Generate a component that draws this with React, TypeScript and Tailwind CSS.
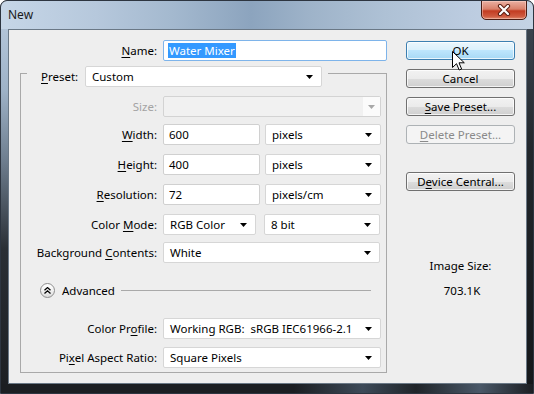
import React from "react";

const Arrow = ({ gray }: { gray?: boolean }) => (
  <svg width="7" height="4" viewBox="0 0 7 4" className="shrink-0">
    <path d="M0 0H7L3.5 4Z" fill={gray ? "#a8a8a8" : "#000"} />
  </svg>
);

function Select({ w, children }: { w: string; children: React.ReactNode }) {
  return (
    <div
      className={`${w} h-[21px] bg-white border border-[#d6d6d6] rounded-[2px] flex items-center justify-between pl-[6px] pr-[8px] whitespace-nowrap`}
    >
      <span>{children}</span>
      <Arrow />
    </div>
  );
}

function Input({ w, children }: { w: string; children: React.ReactNode }) {
  return (
    <div
      className={`${w} h-[21px] bg-white border border-[#d0d0d0] rounded-[2px] flex items-center pl-[5px]`}
    >
      {children}
    </div>
  );
}

function Label({ children, gray }: { children: React.ReactNode; gray?: boolean }) {
  return (
    <div
      className={`w-[137px] shrink-0 text-right pr-[1px] whitespace-nowrap ${gray ? "text-[#a3a3a3]" : "text-black"}`}
    >
      {children}
    </div>
  );
}

function U({ children }: { children: React.ReactNode }) {
  return <span className="underline underline-offset-[2px]">{children}</span>;
}

function Btn({
  children,
  kind,
  className,
}: {
  children: React.ReactNode;
  kind?: "hover" | "disabled";
  className?: string;
}) {
  const base =
    "h-[19px] w-[109px] rounded-[3px] border flex items-center justify-center shadow-[inset_0_0_0_1px_rgba(255,255,255,0.75)]";
  const style =
    kind === "hover"
      ? "border-[#3c7fb1] bg-[linear-gradient(180deg,#eaf6fd_0%,#d9f0fc_50%,#bee6fd_50%,#a7d9f5_100%)] text-black"
      : kind === "disabled"
      ? "border-[#adb2b5] bg-[#f4f4f4] text-[#8a8a8a] shadow-none"
      : "border-[#707070] bg-[linear-gradient(180deg,#f2f2f2_0%,#ebebeb_50%,#dddddd_50%,#cfcfcf_100%)] text-black";
  return <div className={`${base} ${style} ${className ?? ""}`}>{children}</div>;
}

export default function App() {
  return (
    <div className="w-[534px] h-[394px] flex flex-col overflow-hidden bg-white font-['Noto_Sans',sans-serif] text-[11.5px] leading-none text-black select-none">
      <div className="w-[534px] h-[394px] flex flex-col rounded-t-[7px] border border-[#2d3540] bg-[#1b1e22] overflow-hidden relative">
        {/* title bar */}
        <div className="h-[28px] shrink-0 flex items-start bg-[linear-gradient(90deg,#c6d6e7_0%,#b6c8dc_18%,#a4b9cf_32%,#8ca4be_47%,#9eb3c9_58%,#aec1d5_72%,#bccce0_88%,#c4d3e4_100%)]">
          <div className="pl-[7px] pt-[8px] text-[12px] text-[#1a1a1a]">New</div>
          <div className="ml-auto mr-[6px] w-[46px] h-[20px] -mt-[1px] rounded-b-[5px] border border-[#4a1d14] bg-[linear-gradient(180deg,#eab0a2_0%,#d9806a_45%,#c23c22_55%,#cf5a3f_85%,#de8a6e_100%)] shadow-[inset_0_0_0_1px_rgba(255,220,210,0.45)] flex items-center justify-center">
            <svg width="14" height="12" viewBox="0 0 14 12">
              <path d="M3 2L11 10M11 2L3 10" stroke="#5b1e12" strokeWidth="4.2" strokeLinecap="round" />
              <path d="M3 2L11 10M11 2L3 10" stroke="#ffffff" strokeWidth="2.2" strokeLinecap="round" />
            </svg>
          </div>
        </div>

        {/* body */}
        <div className="flex h-[355px] shrink-0">
          <div className="w-[7px] shrink-0 bg-[linear-gradient(180deg,#b2c4d8_0px,#9fb3c8_60px,#6f7f90_130px,#2a2f35_220px,#1c1f23_100%)]" />
          <div className="w-[519px] shrink-0 h-[355px] border border-[#6a7886] bg-[#eeeeee] flex">
            {/* left part */}
            <div className="w-[378px] shrink-0 flex flex-col">
              {/* Name row */}
              <div className="flex items-center mt-[10px]">
                <div className="w-[149px] shrink-0 text-right pr-[1px]">
                  <U>N</U>ame:
                </div>
                <div className="ml-[5px] w-[226px] h-[21px] bg-white border border-[#7eb4ea] rounded-[2px] flex items-center pl-[4px]">
                  <span className="bg-[#3399ff] text-white px-[1px] h-[15px] flex items-center">Water Mixer</span>
                </div>
              </div>

              {/* Group box */}
              <div className="ml-[11px] mt-[12px] w-[367px] h-[300px] border border-[#a9a9a9] flex flex-col">
                {/* Preset header overlapping the border */}
                <div className="flex -mt-[8px]">
                  <div className="ml-[6px] pl-[14px] pr-[6px] bg-[#eeeeee] flex items-center">
                    <div className="w-[44px] shrink-0">
                      <U>P</U>reset:
                    </div>
                    <Select w="w-[237px]">Custom</Select>
                  </div>
                </div>

                {/* Size */}
                <div className="flex items-center mt-[9px]">
                  <Label gray>Size:</Label>
                  <div className="ml-[5px] w-[218px] h-[21px] border border-[#d3d3d3] rounded-[2px] bg-[#f1f1f1] flex justify-end">
                    <div className="w-[17px] h-full bg-[#fbfbfb] flex items-center justify-center">
                      <Arrow gray />
                    </div>
                  </div>
                </div>

                {/* Width */}
                <div className="flex items-center mt-[7px]">
                  <Label>
                    <U>W</U>idth:
                  </Label>
                  <div className="ml-[5px] flex gap-[5px]">
                    <Input w="w-[97px]">600</Input>
                    <Select w="w-[116px]">pixels</Select>
                  </div>
                </div>

                {/* Height */}
                <div className="flex items-center mt-[9px]">
                  <Label>
                    <U>H</U>eight:
                  </Label>
                  <div className="ml-[5px] flex gap-[5px]">
                    <Input w="w-[97px]">400</Input>
                    <Select w="w-[116px]">pixels</Select>
                  </div>
                </div>

                {/* Resolution */}
                <div className="flex items-center mt-[9px]">
                  <Label>
                    <U>R</U>esolution:
                  </Label>
                  <div className="ml-[5px] flex gap-[5px]">
                    <Input w="w-[97px]">72</Input>
                    <Select w="w-[116px]">pixels/cm</Select>
                  </div>
                </div>

                {/* Color Mode */}
                <div className="flex items-center mt-[9px]">
                  <Label>
                    Color <U>M</U>ode:
                  </Label>
                  <div className="ml-[5px] flex gap-[8px]">
                    <Select w="w-[93px]">RGB Color</Select>
                    <Select w="w-[116px]">8 bit</Select>
                  </div>
                </div>

                {/* Background Contents */}
                <div className="flex items-center mt-[7px]">
                  <Label>
                    Background <U>C</U>ontents:
                  </Label>
                  <div className="ml-[5px]">
                    <Select w="w-[217px]">White</Select>
                  </div>
                </div>

                {/* Advanced */}
                <div className="flex items-center mt-[20px] h-[15px]">
                  <div className="ml-[19px] w-[15px] h-[15px] rounded-full border border-[#8d8d8d] bg-[linear-gradient(180deg,#ffffff_0%,#f2f2f2_50%,#dcdcdc_100%)] flex items-center justify-center">
                    <svg width="7" height="7" viewBox="0 0 7 7">
                      <path d="M0.5 3.2L3.5 0.6L6.5 3.2M0.5 6.4L3.5 3.8L6.5 6.4" stroke="#000" strokeWidth="1.3" fill="none" />
                    </svg>
                  </div>
                  <div className="ml-[7px]">Advanced</div>
                  <div className="ml-[6px] mr-[15px] flex-1 h-px bg-[#a9a9a9]" />
                </div>

                {/* Color Profile */}
                <div className="flex items-center mt-[20px]">
                  <Label>
                    Color Pr<U>o</U>file:
                  </Label>
                  <div className="ml-[5px]">
                    <Select w="w-[218px]">Working RGB:&nbsp; sRGB IEC61966-2.1</Select>
                  </div>
                </div>

                {/* Pixel Aspect Ratio */}
                <div className="flex items-center mt-[8px]">
                  <Label>
                    Pi<U>x</U>el Aspect Ratio:
                  </Label>
                  <div className="ml-[5px]">
                    <Select w="w-[218px]">Square Pixels</Select>
                  </div>
                </div>
              </div>
            </div>

            {/* right part */}
            <div className="ml-[19px] w-[109px] shrink-0 flex flex-col mt-[11px]">
              <Btn kind="hover">OK</Btn>
              <Btn className="mt-[9px]">Cancel</Btn>
              <Btn className="mt-[9px]">
                <span>
                  <U>S</U>ave Preset...
                </span>
              </Btn>
              <Btn kind="disabled" className="mt-[9px]">
                <span>
                  <U>D</U>elete Preset...
                </span>
              </Btn>
              <Btn className="mt-[28px]">
                <span>
                  D<U>e</U>vice Central...
                </span>
              </Btn>
              <div className="mt-[69px] flex flex-col items-center gap-[13px]">
                <div>Image Size:</div>
                <div className="pl-[3px]">703.1K</div>
              </div>
            </div>
          </div>
          <div className="w-[6px] shrink-0 bg-[linear-gradient(180deg,#3a434d_0px,#22272c_120px,#15181b_100%)]" />
        </div>
        {/* bottom frame */}
        <div className="flex-1 bg-[linear-gradient(90deg,#1b1e22_0%,#1b1e22_55%,#3d4a58_68%,#1f2429_78%,#4a5868_90%,#1b1e22_100%)]" />

        {/* mouse cursor */}
        <svg
          className="absolute left-[451px] top-[50px] pointer-events-none"
          width="13"
          height="21"
          viewBox="0 0 13 21"
        >
          <path
            d="M0.5 0.5V16.5L4.5 12.7L7.2 19L9.6 18L7 11.8H12.3Z"
            fill="#ffffff"
            stroke="#000"
            strokeWidth="1"
            strokeLinejoin="round"
          />
        </svg>
      </div>
    </div>
  );
}
